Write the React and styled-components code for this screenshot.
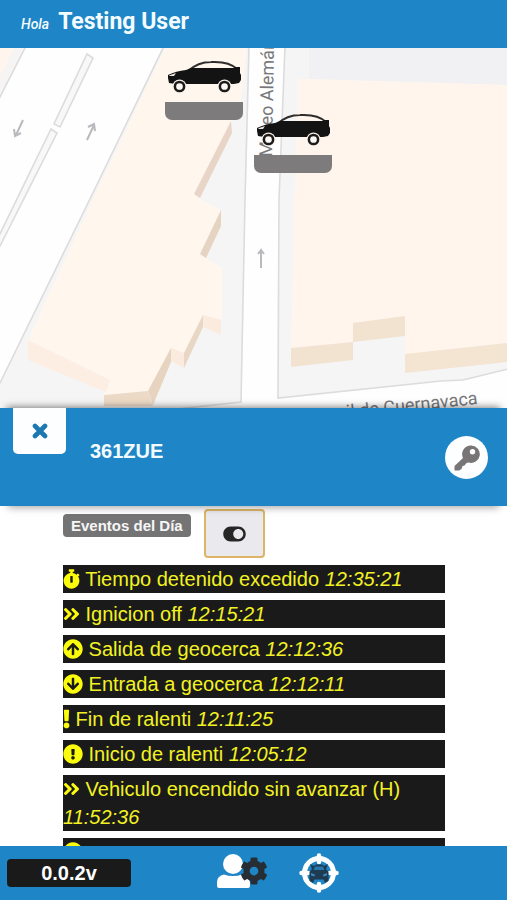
import React from "react";
import styled, { createGlobalStyle } from "styled-components";
import {
  FaStopwatch,
  FaAngleDoubleRight,
  FaArrowCircleUp,
  FaArrowCircleDown,
  FaExclamation,
  FaExclamationCircle,
  FaToggleOn,
  FaCog,
} from "react-icons/fa";

const BLUE = "#1e86c6";
const DARK = "#1b1a1b";

const GlobalStyle = createGlobalStyle`
  *, *::before, *::after { box-sizing: border-box; }
  body {
    margin: 0;
    background: #fff;
    font-family: "Liberation Sans", Arial, sans-serif;
  }
  button { font: inherit; margin: 0; padding: 0; border: 0; cursor: pointer; }
`;

const Screen = styled.div`
  display: flex;
  flex-direction: column;
  height: 100vh;
  overflow: hidden;
`;

const TopBar = styled.header`
  flex: none;
  display: flex;
  align-items: baseline;
  gap: 9px;
  height: 48px;
  padding: 8px 21px 0;
  color: #f4fbff;
  background: ${BLUE};
  font-family: Roboto, "Liberation Sans", sans-serif;
`;

const Greeting = styled.em`
  font-size: 14px;
  font-weight: 500;
`;

const UserName = styled.h1`
  margin: 0;
  font-size: 23px;
  line-height: 28px;
  font-weight: 700;
`;

const MapArea = styled.main`
  position: relative;
  flex: 0 0 40vh;
  overflow: hidden;
  background: #fefefe;
`;

const MapDrawing = styled.svg`
  display: block;
  width: 100%;
  height: 100%;
`;

const Marker = styled.button`
  position: absolute;
  left: ${(p) => p.$x}px;
  top: ${(p) => p.$y}px;
  width: 78px;
  background: none;
`;

const CarDrawing = styled.svg`
  display: block;
  width: 78px;
  height: 44px;
`;

const MarkerPlate = styled.span`
  display: block;
  height: 18px;
  border-radius: 0 0 7px 7px;
  background: #7d7b7b;
`;

const UnitBar = styled.section`
  position: relative;
  flex: none;
  display: flex;
  align-items: flex-start;
  height: 98px;
  padding: 0 19px 0 13px;
  background: ${BLUE};
  box-shadow: 0 -8px 7px -7px rgba(0, 0, 0, 0.5), 0 9px 8px -8px rgba(0, 0, 0, 0.4);
`;

const CloseButton = styled.button`
  display: grid;
  place-items: center;
  width: 53px;
  height: 46px;
  background: #fdfeff;
  border-radius: 0 0 5px 5px;
`;

const UnitName = styled.h2`
  flex: 1;
  margin: 31px 0 0 24px;
  color: #f4fbff;
  font-size: 20px;
  line-height: 24px;
  font-weight: 700;
`;

const KeyButton = styled.button`
  display: grid;
  place-items: center;
  width: 43px;
  height: 43px;
  margin-top: 28px;
  border-radius: 50%;
  background: #fdfeff;
`;

const Events = styled.section`
  flex: 1;
  min-height: 0;
  overflow: hidden;
  padding: 3px 62px 0 63px;
`;

const EventsHead = styled.div`
  display: flex;
  align-items: flex-start;
  gap: 13px;
`;

const EventsTitle = styled.h3`
  margin: 5px 0 0;
  padding: 0 8px;
  border-radius: 4px;
  color: #f6f6f6;
  background: #757475;
  font-size: 15px;
  line-height: 23px;
  font-weight: 700;
`;

const ToggleButton = styled.button`
  display: grid;
  place-items: center;
  width: 61px;
  height: 49px;
  border: 2px solid #deb566;
  border-radius: 4px;
  color: #262626;
  background: #e9e9ee;

  svg {
    width: 23px;
    height: 20px;
  }
`;

const EventList = styled.ul`
  display: grid;
  gap: 7px;
  margin: 7px 0 0;
  padding: 0;
  list-style: none;
`;

const EventRow = styled.li`
  min-height: 28px;
  color: #f2f222;
  background: ${DARK};
  font-size: 20px;
  line-height: 28px;

  svg {
    width: ${(p) => p.$iconWidth}px;
    height: 20px;
    color: #fbfb0c;
    vertical-align: -3px;
  }
`;

const BottomBar = styled.footer`
  flex: none;
  display: flex;
  align-items: center;
  height: 54px;
  padding: 0 7px;
  background: ${BLUE};
`;

const Version = styled.span`
  width: 124px;
  margin-right: 84px;
  border-radius: 4px;
  color: #fff;
  background: ${DARK};
  font-size: 20px;
  line-height: 28px;
  font-weight: 700;
  text-align: center;
`;

const NavButton = styled.button`
  display: flex;
  margin-right: 30px;
  background: none;
`;

function StreetMap() {
  return (
    <MapDrawing viewBox="0 48 507 360" preserveAspectRatio="xMinYMin slice" aria-hidden="true">
      <g stroke="#dcdcde" strokeWidth="1.6">
        <path d="M-3 46H26L-3 103Z" fill="#f6f5f4" />
        <path d="M164 46H249L245 200L241 402L150 412H-4V390L0 383L88 203Z" fill="#f5f5f5" />
        <path d="M285 46L279 200L278 398L441 381L463 380L512 368V46Z" fill="#f5f5f6" />
        <path d="M87 54L93 58L60 127L54 124Z" fill="#f8f8f8" />
        <path d="M51 129L57 133L-3 252L-3 240Z" fill="#f8f8f8" />
      </g>
      <path d="M-1 47H14L-1 77Z" fill="#fff5ed" />
      <path
        d="M165 48H247L240 108L232 121L195 196L221 210L201 255L222 268V320L203 315L184 353L171 348L148 391L104 395L110 381L28 340L91 203Z"
        fill="#fff6ee"
      />
      <path d="M231 121L232 133L200 198L194 194Z" fill="#e9d5c7" />
      <path d="M221 210V226L206 258L200 254Z" fill="#e5d4c2" />
      <path d="M203 315L221 320V335L203 327Z" fill="#faebde" />
      <path d="M203 315V327L184 368V353Z" fill="#e9d7c5" />
      <path d="M171 348L184 353V368L171 361Z" fill="#faebde" />
      <path d="M171 348V362L153 405L148 391Z" fill="#e7d4c0" />
      <path d="M104 395L148 391L153 406H104Z" fill="#ecdac7" />
      <path d="M28 340L110 380L106 392L28 360Z" fill="#fdeee3" />
      <path d="M309 46H507V85L309 79Z" fill="#f1f0f2" />
      <path d="M298 79H309L507 85V343L405 354V317L353 323V343L291 348Z" fill="#fff5ed" />
      <path d="M291 348L353 342V360L291 367Z" fill="#f2e3d1" />
      <path d="M353 323L405 316V336L353 342Z" fill="#f2e3d1" />
      <path d="M405 354L507 343V362L405 373Z" fill="#f4e4d2" />
      <g stroke="#b9b9be" strokeWidth="2" fill="none">
        <path d="M23 120L16 135M14 129L15 136L21 133" />
        <path d="M87 140L94 125M88 127L94 124L95 131" />
        <path d="M261 268V251M258 254L261 250L264 254" />
      </g>
      <g fill="#77787b" fontFamily="Roboto, Liberation Sans, sans-serif" fontSize="18">
        <text transform="translate(272 157) rotate(-89)">Mateo Alemán</text>
        <text transform="translate(478 404) rotate(-6)" textAnchor="end">
          Ferrocarril de Cuernavaca
        </text>
      </g>
    </MapDrawing>
  );
}

function Car() {
  return (
    <CarDrawing viewBox="165 58 78 44" aria-hidden="true">
      <path
        d="M188 71Q198 62 211 62Q229 61 237 69"
        fill="none"
        stroke="#2e2d2c"
        strokeWidth="2"
      />
      <path
        d="M168 75Q176 71 186 70L191 68H234L235 67H240V73L241 75V80L239 83L234 84H175L169 83L168 78Z"
        fill="#141313"
      />
      <path d="M170 75L176 73L174 76H169Z" fill="#e8e5e2" />
      <g fill="#f7f0e9">
        <circle cx="179.500" cy="86.500" r="7" />
        <circle cx="224.500" cy="86.500" r="7" />
      </g>
      <g fill="#fbf8f5" stroke="#1c1b1a" strokeWidth="2.500">
        <circle cx="179.500" cy="86.500" r="4.600" />
        <circle cx="224.500" cy="86.500" r="4.600" />
      </g>
    </CarDrawing>
  );
}

const markers = [
  { id: "a", x: 165, y: 10 },
  { id: "b", x: 254, y: 63 },
];

const events = [
  { Icon: FaStopwatch, width: 17, label: "Tiempo detenido excedido", time: "12:35:21" },
  { Icon: FaAngleDoubleRight, width: 17, label: "Ignicion off", time: "12:15:21" },
  { Icon: FaArrowCircleUp, width: 20, label: "Salida de geocerca", time: "12:12:36" },
  { Icon: FaArrowCircleDown, width: 20, label: "Entrada a geocerca", time: "12:12:11" },
  { Icon: FaExclamation, width: 7, label: "Fin de ralenti", time: "12:11:25" },
  { Icon: FaExclamationCircle, width: 20, label: "Inicio de ralenti", time: "12:05:12" },
  { Icon: FaAngleDoubleRight, width: 17, label: "Vehiculo encendido sin avanzar (H)", time: "11:52:36" },
  { Icon: FaExclamationCircle, width: 20 },
];

export default function App() {
  return (
    <Screen>
      <GlobalStyle />
      <TopBar>
        <Greeting>Hola</Greeting>
        <UserName>Testing User</UserName>
      </TopBar>
      <MapArea>
        <StreetMap />
        {markers.map((m) => (
          <Marker key={m.id} $x={m.x} $y={m.y} aria-label="Vehículo">
            <Car />
            <MarkerPlate />
          </Marker>
        ))}
      </MapArea>
      <UnitBar>
        <CloseButton aria-label="Cerrar">
          <svg width="16" height="16" viewBox="0 0 16 16" aria-hidden="true">
            <path
              d="M3 3L13 13M13 3L3 13"
              stroke="#1b78b0"
              strokeWidth="4.600"
              strokeLinecap="round"
            />
          </svg>
        </CloseButton>
        <UnitName>361ZUE</UnitName>
        <KeyButton aria-label="Llave">
          <svg width="28" height="28" viewBox="0 0 28 28" aria-hidden="true">
            <path
              fill="#777576"
              fillRule="evenodd"
              d="M18 1.500A8.700 8.700 0 1 1 15.500 18.500L13.500 19L11.500 21.500L9.500 22L8.500 25L6 26.500H1.500V22L10 14A8.700 8.700 0 0 1 18 1.500ZM19.500 5A2.700 2.700 0 1 0 19.500 10.400A2.700 2.700 0 1 0 19.500 5Z"
            />
          </svg>
        </KeyButton>
      </UnitBar>
      <Events>
        <EventsHead>
          <EventsTitle>Eventos del Día</EventsTitle>
          <ToggleButton aria-label="Mostrar eventos" aria-pressed="true">
            <FaToggleOn />
          </ToggleButton>
        </EventsHead>
        <EventList>
          {events.map(({ Icon, width, label, time }, i) => (
            <EventRow key={i} $iconWidth={width}>
              <Icon aria-hidden="true" /> {label} {time && <em>{time}</em>}
            </EventRow>
          ))}
        </EventList>
      </Events>
      <BottomBar>
        <Version>0.0.2v</Version>
        <NavButton aria-label="Configuración de usuario">
          <svg width="54" height="40" viewBox="215 854 54 40" aria-hidden="true">
            <circle cx="233" cy="865" r="10" fill="#fff" />
            <path
              d="M217 887V883Q217 877 224 875.500Q228 877 233 877Q238 877 242 875.500Q250 878 250 884V887Q250 889 248 889H219Q217 889 217 887Z"
              fill="#fff"
            />
            <FaCog x="240" y="858" size="28" color="#262d35" />
          </svg>
        </NavButton>
        <NavButton aria-label="Centrar vehículos">
          <svg width="40" height="40" viewBox="0 0 40 40" aria-hidden="true">
            <circle cx="20" cy="20" r="14.500" fill="none" stroke="#fff" strokeWidth="5" />
            <path
              d="M20 2.500V9M20 31V37.500M2.500 20H9M31 20H37.500"
              stroke="#fff"
              strokeWidth="4.500"
              strokeLinecap="round"
            />
            <path
              d="M11 11L15 13L17 11.500H23L25 13L29 11L27 16L29.500 19V28L26 30L24.500 26.500H15.500L14 30L10.500 28V19L13 16Z"
              fill="#1f3b52"
            />
            <path d="M16 13.500H24L25.500 17H14.500Z" fill="#2a76aa" />
            <path d="M12 20L16 21.500L15.500 23.500L12 22.500ZM28 20L24 21.500L24.500 23.500L28 22.500Z" fill="#3c85b5" />
          </svg>
        </NavButton>
      </BottomBar>
    </Screen>
  );
}
